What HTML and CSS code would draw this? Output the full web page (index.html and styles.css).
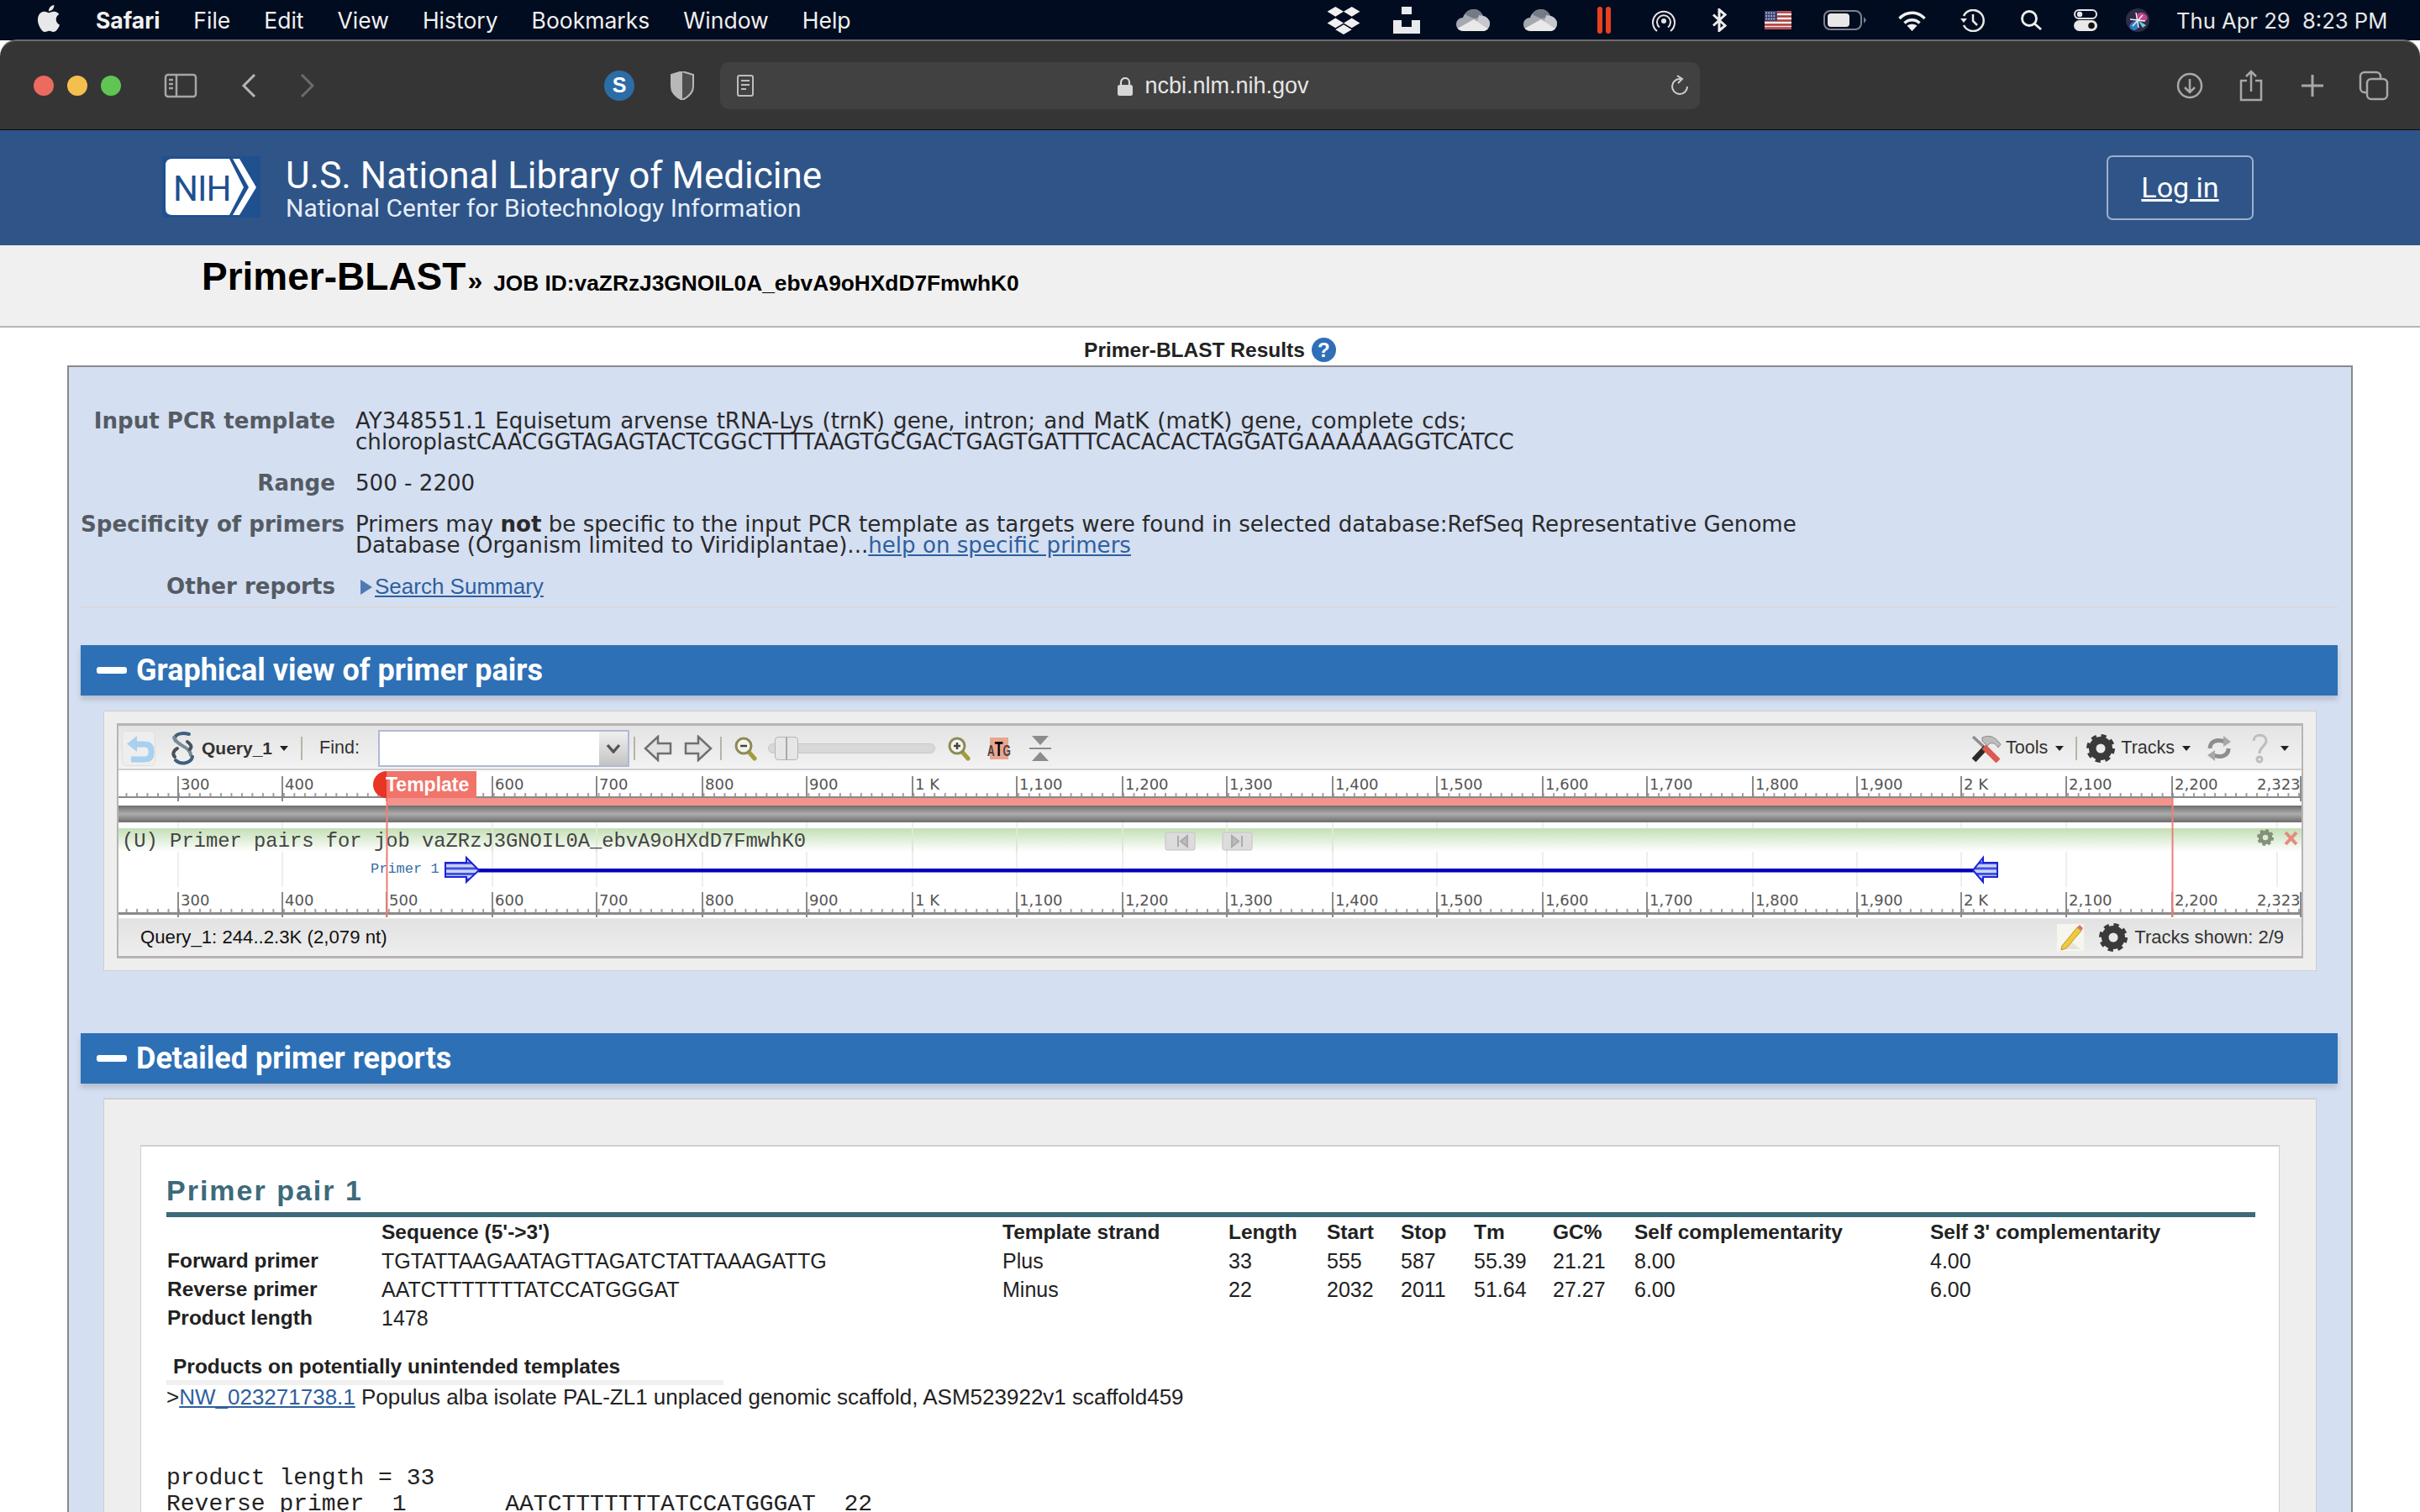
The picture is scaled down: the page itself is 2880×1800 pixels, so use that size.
FILE: index.html
```html
<!DOCTYPE html>
<html lang="en">
<head>
    <meta charset="UTF-8">
    <title>Primer-BLAST Results</title>
    <link rel="stylesheet" href="styles.css">
</head>
<body>
<svg class="defs" width="0" height="0">
    <symbol id="gear" viewBox="0 0 40 40">
        <circle cx="20" cy="20" r="11.5" fill="none" stroke="currentColor" stroke-width="10"/>
        <circle cx="20" cy="20" r="17" fill="none" stroke="currentColor" stroke-width="6" stroke-dasharray="7 6.35"/>
    </symbol>
    <clipPath id="cloudclip">
        <path d="M9 26C3 26 0 22 0 18 0 13 4 10 8 10 10 4 15 0 21 0 26 0 30 3 32 8 37 9 40 13 40 17 40 22 36 26 32 26z"/>
    </clipPath>
    <symbol id="cloud" viewBox="0 0 40 26">
        <g clip-path="url(#cloudclip)">
            <rect width="40" height="26" fill="#a4a8af"/>
            <path d="M8 0h26v9l-6 1-7 1-9-4z" fill="#747b86"/>
            <path d="M27 7l13 2v17H22z" fill="#c5c8cd"/>
            <path d="M-2 25l23-13 21 14v2H-2z" fill="#e9e9ea"/>
        </g>
    </symbol>
    <symbol id="mag" viewBox="0 0 28 30">
        <path d="M18 19l7 8" stroke="#a39c3c" stroke-width="5" stroke-linecap="round"/>
        <circle cx="12" cy="12" r="9" fill="#f4f4ec" stroke="#8d8a58" stroke-width="3"/>
    </symbol>
    <pattern id="stripes" width="6" height="6.5" patternUnits="userSpaceOnUse">
        <rect width="6" height="3.2" fill="#3f4fe0"/>
        <rect y="3.2" width="6" height="3.3" fill="#c9d4fb"/>
    </pattern>
    <pattern id="minor" x="213" width="12.49" height="4" patternUnits="userSpaceOnUse">
        <rect width="2" height="4" fill="#a0a0a0"/>
    </pattern>
    <linearGradient id="seqbar" x1="0" y1="0" x2="0" y2="1">
        <stop offset="0" stop-color="#6e6e6e"/>
        <stop offset=".5" stop-color="#acacac"/>
        <stop offset="1" stop-color="#6c6c6c"/>
    </linearGradient>
    <linearGradient id="trackhead" x1="0" y1="0" x2="0" y2="1">
        <stop offset="0" stop-color="#c3dfb5"/>
        <stop offset="1" stop-color="#ffffff"/>
    </linearGradient>
</svg>

<div class="menubar">
    <svg class="apple" viewBox="0 0 24 24"><path fill="#e8e8e8" d="M12.152 6.896c-.948 0-2.415-1.078-3.96-1.04-2.04.027-3.91 1.183-4.961 3.014-2.117 3.675-.546 9.103 1.519 12.09 1.013 1.454 2.208 3.09 3.792 3.039 1.52-.065 2.09-.987 3.935-.987 1.831 0 2.35.987 3.96.948 1.637-.026 2.676-1.48 3.676-2.948 1.156-1.688 1.636-3.325 1.662-3.415-.039-.013-3.182-1.221-3.22-4.857-.026-3.04 2.48-4.494 2.597-4.559-1.429-2.09-3.623-2.324-4.39-2.376-2-.156-3.675 1.09-4.61 1.09zM15.53 3.83c.843-1.012 1.4-2.427 1.245-3.83-1.207.052-2.662.805-3.532 1.818-.78.896-1.454 2.338-1.273 3.714 1.338.104 2.715-.688 3.559-1.701"/></svg>
    <nav class="menus">
        <b>Safari</b><span>File</span><span>Edit</span><span>View</span><span>History</span><span>Bookmarks</span><span>Window</span><span>Help</span>
    </nav>
    <div class="status-icons">
        <svg width="40" height="33" viewBox="0 0 40 34"><path fill="#f0f0f0" d="M10 0l10 6-10 6L0 6zM30 0l10 6-10 6-10-6zM10 14l10 6-10 6-10-6zM30 14l10 6-10 6-10-6zM20 22l10 6-10 6-10-6z"/></svg>
        <svg width="32" height="32" viewBox="0 0 32 32"><path fill="#e9eaed" d="M10 0h12v9H10zM0 16h10v8h12v-8h10v16H0z"/></svg>
        <svg width="40" height="26"><use href="#cloud"/></svg>
        <svg width="40" height="26"><use href="#cloud"/></svg>
        <svg width="16" height="32" viewBox="0 0 16 32"><rect width="6" height="32" rx="3" fill="#e8401f"/><rect x="10" width="6" height="32" rx="3" fill="#e8401f"/></svg>
        <svg width="28" height="27" viewBox="0 0 28 27" fill="none" stroke="#e4e4e4" stroke-width="2"><path d="M6 26A13 13 0 1 1 22 26M9 21.5A8 8 0 1 1 19 21.5"/><circle cx="14" cy="14" r="3" fill="#e4e4e4" stroke="none"/></svg>
        <svg width="18" height="28" viewBox="0 0 18 28" fill="none" stroke="#ececec" stroke-width="3"><path d="M2 7.5l14 13-7 6V1.500l7 6-14 13"/></svg>
        <svg class="flag" width="32" height="22" viewBox="0 0 32 22"><rect width="32" height="22" fill="#efefef"/><path d="M0 1.500h32M0 6.500h32M0 11.500h32M0 16.500h32M0 20.500h32" stroke="#b23a3a" stroke-width="2.400"/><rect width="15" height="12" fill="#3f4577"/><path d="M1.500 2.500h12M1.500 6h12M1.500 9.500h12" stroke="#dfe0ea" stroke-width="1.500" stroke-dasharray="1.500 1.500"/></svg>
        <svg width="51" height="24" viewBox="0 0 51 24"><rect x="1" y="1" width="44" height="22" rx="7" fill="none" stroke="#7e838a" stroke-width="2"/><rect x="5" y="4" width="26" height="16" rx="4" fill="#e8e8e8"/><path d="M48 8l3 4-3 4z" fill="#7e838a"/></svg>
        <svg width="33" height="25" viewBox="0 0 33 25" fill="none" stroke="#f0f0f0" stroke-width="3.500"><path d="M1.500 10C10 1 23 1 31.500 10M7.500 15.500c5-5 13-5 18 0"/><path d="M16.500 25l-6-6.500c3-2.500 9-2.500 12 0z" fill="#f0f0f0" stroke="none"/></svg>
        <svg width="29" height="27" viewBox="0 0 29 27" fill="none" stroke="#e8e8e8" stroke-width="2.500"><path d="M4 8A12.500 12.500 0 1 1 4 19"/><path d="M15 6v8l5 5"/><path d="M0 11h8L4 16z" fill="#e8e8e8" stroke="none"/></svg>
        <svg width="25" height="24" viewBox="0 0 25 24" fill="none" stroke="#f0f0f0" stroke-width="2.800"><circle cx="10" cy="10" r="8.500"/><path d="M16 16l8 7"/></svg>
        <svg width="28" height="26" viewBox="0 0 28 26"><rect x="1" y="1" width="26" height="10" rx="5" fill="none" stroke="#e8e8e8" stroke-width="2"/><circle cx="7" cy="6" r="3.200" fill="#e8e8e8"/><rect y="13" width="28" height="13" rx="6.500" fill="#e8e8e8"/><circle cx="21" cy="19.500" r="3.800" fill="#111"/></svg>
        <svg width="28" height="28" viewBox="0 0 28 28"><circle cx="14" cy="14" r="14" fill="#2e2c48"/><path d="M14 14C8 6 20 1 25 9c3 6-6 9-11 5z" fill="#c2458a"/><path d="M14 14c-7 1-13 7-7 11s11-5 7-11z" fill="#2f7fc4"/><path d="M14 14l10 6-4 3z" fill="#6fd0d8"/><path d="M5 13l18 2M12 5l3 18M8 21L20 8" stroke="#f4f4f4" stroke-width="1.400"/></svg>
        <span class="clock">Thu Apr 29&nbsp;&nbsp;8:23 PM</span>
    </div>
</div>

<div class="safari">
    <div class="lights"><i class="red"></i><i class="yellow"></i><i class="green"></i></div>
    <svg class="sidebar-btn" width="40" height="30" viewBox="0 0 40 30" fill="none" stroke="#a6a6a6" stroke-width="2.500"><rect x="2" y="2" width="36" height="26" rx="3"/><path d="M15 2v26M6 8h5M6 13h5M6 18h5"/></svg>
    <svg class="back-btn" width="18" height="30" viewBox="0 0 18 30" fill="none" stroke="#b5b5b5" stroke-width="3"><path d="M16 2L3 15l13 13"/></svg>
    <svg class="fwd-btn" width="18" height="30" viewBox="0 0 18 30" fill="none" stroke="#6b6b6b" stroke-width="3"><path d="M2 2l13 13L2 28"/></svg>
    <svg class="ext-s" width="36" height="36" viewBox="0 0 36 36"><circle cx="18" cy="18" r="18" fill="#2c6da6"/><text x="18" y="26" text-anchor="middle" class="ext-letter">S</text></svg>
    <svg class="ext-shield" width="28" height="34" viewBox="0 0 28 34"><path d="M14 0l13 4v14c0 8-7 13-13 16C8 31 1 26 1 18V4z" fill="#4e4e4e" stroke="#b8b8b8" stroke-width="2"/><path d="M14 0v34C8 31 1 26 1 18V4z" fill="#b8b8b8"/></svg>
    <div class="addressbar">
        <svg class="reader" width="20" height="26" viewBox="0 0 20 26" fill="none" stroke="#bdbdbd" stroke-width="2"><rect x="1" y="1" width="18" height="24" rx="2"/><path d="M5 7h10M5 12h10M5 17h6"/></svg>
        <div class="url">
            <svg width="18" height="22" viewBox="0 0 18 22"><rect y="9" width="18" height="13" rx="2.500" fill="#d6d6d6"/><path d="M4 10V6a5 5 0 0 1 10 0v4" fill="none" stroke="#d6d6d6" stroke-width="2.200"/></svg>
            <span>ncbi.nlm.nih.gov</span>
        </div>
        <svg class="reload" width="22" height="26" viewBox="0 0 22 26" fill="none" stroke="#cfcfcf" stroke-width="2"><path d="M13 5a9 9 0 1 0 8 9"/><path d="M9 1l6 4-5 5"/></svg>
    </div>
    <div class="safari-right">
        <svg width="32" height="34" viewBox="0 0 32 34" fill="none" stroke="#a8a8a8" stroke-width="2.500"><circle cx="16" cy="17" r="14"/><path d="M16 9v16M10 19l6 6 6-6"/></svg>
        <svg width="28" height="38" viewBox="0 0 28 38" fill="none" stroke="#a8a8a8" stroke-width="2.500"><path d="M9 13H2v23h24V13h-7M14 26V2M8 8l6-6 6 6"/></svg>
        <svg width="28" height="28" viewBox="0 0 28 28" fill="none" stroke="#a8a8a8" stroke-width="3"><path d="M14 1v26M1 14h26"/></svg>
        <svg width="36" height="36" viewBox="0 0 36 36" fill="none" stroke="#a8a8a8" stroke-width="2.500"><rect x="2" y="2" width="24" height="24" rx="5"/><rect x="10" y="10" width="24" height="24" rx="5" fill="#353535"/></svg>
    </div>
</div>

<header class="nlm-header">
    <svg class="nih-logo" width="117" height="73" viewBox="0 0 117 73">
        <rect width="117" height="73" fill="#1f5090"/>
        <path d="M12 3h68l17 34-17 33H12q-8 0-8-8V11q0-8 8-8z" fill="#fff"/>
        <path d="M84 3h8l20 34-20 33h-8l19-33z" fill="#fff"/>
        <text x="13" y="53" class="nih-text">NIH</text>
    </svg>
    <div class="nlm-titles">
        <div class="nlm-main">U.S. National Library of Medicine</div>
        <div class="nlm-sub">National Center for Biotechnology Information</div>
    </div>
    <a class="login" href="#">Log in</a>
</header>

<div class="app-title">
    <h1>Primer-BLAST</h1><span class="raquo">»</span><span class="job-id">JOB ID:vaZRzJ3GNOIL0A_ebvA9oHXdD7FmwhK0</span>
</div>

<div class="results-title">
    <b>Primer-BLAST Results</b>
    <span class="help-dot">?</span>
</div>

<main class="panel">
    <dl class="info">
        <dt class="row-template">Input PCR template</dt>
        <dd class="row-template"><span class="loose">AY348551.1 Equisetum arvense tRNA-Lys (trnK) gene, intron; and MatK (matK) gene, complete cds;</span><br>chloroplastCAACGGTAGAGTACTCGGCTTTTAAGTGCGACTGAGTGATTTCACACACTAGGATGAAAAAAGGTCATCC</dd>
        <dt class="row-range">Range</dt>
        <dd class="row-range">500 - 2200</dd>
        <dt class="row-spec">Specificity of primers</dt>
        <dd class="row-spec">Primers may <b>not</b> be specific to the input PCR template as targets were found in selected database:RefSeq Representative Genome<br>Database (Organism limited to Viridiplantae)...<a href="#">help on specific primers</a></dd>
        <dt class="row-other">Other reports</dt>
        <dd class="row-other summary"><i class="tri"></i><a href="#">Search Summary</a></dd>
    </dl>

    <h2 class="section-bar first"><i></i>Graphical view of primer pairs</h2>

    <section class="viewer-card">
        <div class="viewer">
            <div class="vtool">
                <svg class="t-undo" width="40" height="42" viewBox="0 0 40 42"><rect x=".5" y=".5" width="39" height="41" rx="5" fill="#eeeeee" stroke="#dedede"/><path d="M14 16h13q8 0 8 8v2q0 8-8 8H11" fill="none" stroke="#a9d0ee" stroke-width="7"/><path d="M6 15.500L18 6v19z" fill="#a9d0ee"/></svg>
                <svg class="t-chain" width="28" height="44" viewBox="0 0 28 44" fill="none" stroke-width="4" stroke-linecap="round"><path d="M6 13C2 6 12 2 22 5" stroke="#3f5f80"/><path d="M4 9c2 9 20 11 20 21" stroke="#7a8a99"/><path d="M20 14c4 3 6 6 3 9M8 22c-5 3-6 7-3 10" stroke="#4a4f58"/><path d="M6 36c6 6 18 4 20-4" stroke="#3f5f80"/></svg>
                <b class="t-query">Query_1</b>
                <i class="caret t-caret"></i>
                <i class="t-sep sep-a"></i>
                <span class="t-find">Find:</span>
                <div class="combo"><div class="combo-input"></div><div class="combo-btn"><svg width="18" height="12" viewBox="0 0 18 12" fill="none" stroke="#555" stroke-width="3.400"><path d="M2 2l7 8 7-8"/></svg></div></div>
                <i class="t-sep sep-b"></i>
                <svg class="t-arrow a-left" width="34" height="32" viewBox="0 0 34 32"><path d="M17 2L2 16l15 14V22h15V10H17z" fill="#e2e2e2" stroke="#6f6f6f" stroke-width="2.500"/></svg>
                <svg class="t-arrow a-right" width="34" height="32" viewBox="0 0 34 32"><path d="M17 2l15 14-15 14V22H2V10h15z" fill="#e2e2e2" stroke="#6f6f6f" stroke-width="2.500"/></svg>
                <i class="t-sep sep-c"></i>
                <svg class="t-mag m-out" width="28" height="30"><use href="#mag"/><path d="M8 12h8" stroke="#444" stroke-width="2.500"/></svg>
                <div class="slider"><div class="slider-thumb"></div></div>
                <svg class="t-mag m-in" width="28" height="30"><use href="#mag"/><path d="M8 12h8M12 8v8" stroke="#444" stroke-width="2.500"/></svg>
                <svg class="t-atg" width="30" height="26" viewBox="0 0 30 26"><rect x="4" width="22" height="26" fill="#eaa58f"/><text x="15" y="15" text-anchor="middle" transform="scale(1 1.500)" class="atg-text">A<tspan class="atg-t">T</tspan>G</text></svg>
                <svg class="t-collapse" width="26" height="32" viewBox="0 0 26 32"><path d="M3 1h20l-10 11zM3 31h20L13 20z" fill="#8c8c8c"/><path d="M0 16h26" stroke="#8c8c8c" stroke-width="2"/></svg>

                <svg class="t-tools" width="36" height="34" viewBox="0 0 36 34"><path d="M2 3l15 14" stroke="#8c8c8c" stroke-width="3.500"/><path d="M17 16L3 31" stroke="#2a2a2a" stroke-width="6.500"/><path d="M15 15l17 17" stroke="#dc5a50" stroke-width="7"/><path d="M13 4q12-6 22 8l-3 4q-4-7-10-5l-3 3-6-6z" fill="#bdbdbd" stroke="#8a8a8a"/></svg>
                <span class="t-tools-label">Tools</span>
                <i class="caret t-caret"></i>
                <i class="t-sep sep-d"></i>
                <svg class="t-gear" width="34" height="34" color="#3a3a3a"><use href="#gear"/></svg>
                <span class="t-tracks-label">Tracks</span>
                <i class="caret t-caret"></i>
                <svg class="t-refresh" width="30" height="32" viewBox="0 0 30 32" fill="none" stroke="#8e8e8e" stroke-width="5"><path d="M4 16C4 8 12 4 22 8"/><path d="M26 16c0 8-8 12-18 8"/><path d="M20 1l9 7-9 6zM10 31l-9-7 9-6z" fill="#a8a8a8" stroke="none"/></svg>
                <svg class="t-question" width="20" height="36" viewBox="0 0 20 36" fill="none" stroke="#bdbdbd" stroke-width="3"><path d="M3 9c0-9 15-9 15 0 0 6-8 7-8 15"/><circle cx="10" cy="31" r="3"/></svg>
                <i class="caret t-caret-q"></i>
            </div>

            <svg class="seqview" width="2598" height="176" viewBox="142 918 2598 176">
                <!-- grid lines -->
                <path class="grid" d="M213 979V1057M337 979V1057M461 979V1057M587 979V1057M711 979V1057M837 979V1057M961 979V1057M1087 979V1057M1211 979V1057M1337 979V1057M1461 979V1057M1587 979V1057M1711 979V1057M1837 979V1057M1961 979V1057M2087 979V1057M2211 979V1057M2335 979V1057M2460 979V1057M2711 979V1057"/>

                <!-- top ruler -->
                <rect x="142" y="945" width="2598" height="4" fill="url(#minor)"/>
                <rect x="142" y="949" width="2598" height="2" fill="#8a8a8a"/>
                <path class="major" d="M213 925V955M337 925V955M461 925V955M587 925V955M711 925V955M837 925V955M961 925V955M1087 925V955M1211 925V955M1337 925V955M1461 925V955M1587 925V955M1711 925V955M1837 925V955M1961 925V955M2087 925V955M2211 925V955M2335 925V955M2460 925V955M2586 925V955M2739 925V955"/>
                <g class="ruler-text">
                    <text x="216" y="941">300</text><text x="340" y="941">400</text><text x="590" y="941">600</text><text x="714" y="941">700</text><text x="840" y="941">800</text><text x="964" y="941">900</text><text x="1090" y="941">1 K</text><text x="1214" y="941">1,100</text><text x="1340" y="941">1,200</text><text x="1464" y="941">1,300</text><text x="1590" y="941">1,400</text><text x="1714" y="941">1,500</text><text x="1840" y="941">1,600</text><text x="1964" y="941">1,700</text><text x="2090" y="941">1,800</text><text x="2214" y="941">1,900</text><text x="2338" y="941">2 K</text><text x="2463" y="941">2,100</text><text x="2589" y="941">2,200</text><text x="2687" y="941">2,323</text>
                </g>

                <!-- template range and sequence bar -->
                <rect x="461" y="951" width="2125" height="9" fill="#f4938c"/>
                <rect x="142" y="960" width="2598" height="20" fill="url(#seqbar)"/>

                <!-- primer track -->
                <rect x="142" y="987" width="2598" height="28" fill="url(#trackhead)"/>
                <path class="grid-head" d="M587 987V1015M711 987V1015M1087 987V1015M1211 987V1015M1337 987V1015M1461 987V1015M1587 987V1015"/>
                <text x="146" y="1009" class="track-title">(U) Primer pairs for job vaZRzJ3GNOIL0A_ebvA9oHXdD7FmwhK0</text>
                <g class="track-btn">
                    <rect x="1388" y="992" width="35" height="21" rx="2"/><path d="M1403 996v13M1414 996l-8 6.500 8 6.500z"/>
                    <rect x="1456" y="992" width="35" height="21" rx="2"/><path d="M1479 996v13M1467 996l8 6.500-8 6.500z"/>
                </g>
                <use href="#gear" x="2687" y="988" width="20" height="20" color="#84907c"/>
                <path d="M2721 992l13 14M2734 992l-13 14" stroke="#e58a80" stroke-width="4"/>

                <text x="442" y="1040" class="primer-label">Primer 1</text>
                <rect x="570" y="1035" width="1780" height="4.500" fill="#0000bb"/>
                <path d="M531 1028h25v-6l15 15-15 14v-6h-25z" fill="url(#stripes)" stroke="#1e22d8" stroke-width="2"/>
                <path d="M2378 1028h-17v-6l-12 15 12 14v-6h17z" fill="url(#stripes)" stroke="#1e22d8" stroke-width="2"/>

                <!-- bottom ruler -->
                <rect x="142" y="1083" width="2598" height="4" fill="url(#minor)"/>
                <rect x="142" y="1087" width="2598" height="3" fill="#8a8a8a"/>
                <path class="major" d="M213 1063V1093M337 1063V1093M461 1063V1093M587 1063V1093M711 1063V1093M837 1063V1093M961 1063V1093M1087 1063V1093M1211 1063V1093M1337 1063V1093M1461 1063V1093M1587 1063V1093M1711 1063V1093M1837 1063V1093M1961 1063V1093M2087 1063V1093M2211 1063V1093M2335 1063V1093M2460 1063V1093M2586 1063V1093M2739 1063V1093"/>
                <g class="ruler-text">
                    <text x="216" y="1079">300</text><text x="340" y="1079">400</text><text x="464" y="1079">500</text><text x="590" y="1079">600</text><text x="714" y="1079">700</text><text x="840" y="1079">800</text><text x="964" y="1079">900</text><text x="1090" y="1079">1 K</text><text x="1214" y="1079">1,100</text><text x="1340" y="1079">1,200</text><text x="1464" y="1079">1,300</text><text x="1590" y="1079">1,400</text><text x="1714" y="1079">1,500</text><text x="1840" y="1079">1,600</text><text x="1964" y="1079">1,700</text><text x="2090" y="1079">1,800</text><text x="2214" y="1079">1,900</text><text x="2338" y="1079">2 K</text><text x="2463" y="1079">2,100</text><text x="2589" y="1079">2,200</text><text x="2687" y="1079">2,323</text>
                </g>

                <!-- template markers -->
                <path d="M461 919a16 16 0 0 0 0 32z" fill="#e83524"/>
                <rect x="461" y="919" width="107" height="32" fill="#f1746a"/>
                <text x="460" y="943" class="template-label">Template</text>
                <path d="M461.500 951V1093M2586.500 951V1093" stroke="#ee7f78" stroke-width="2"/>
            </svg>

            <div class="vstatus">
                <span class="range-text">Query_1: 244..2.3K (2,079 nt)</span>
                <svg class="s-note" width="32" height="32" viewBox="0 0 32 32"><rect width="32" height="32" fill="#f6f6ee"/><path d="M2 30h26L16 20z" fill="#e4e4dc"/><path d="M6 26L24 4l5 4-18 21-6 2z" fill="#f0c93c" stroke="#b89a28"/><path d="M24 4l3-3 4 4-2 3z" fill="#e07070"/></svg>
                <svg class="s-gear" width="34" height="34" color="#3a3a3a"><use href="#gear"/></svg>
                <span class="tracks-shown">Tracks shown: 2/9</span>
            </div>
        </div>
    </section>

    <h2 class="section-bar second"><i></i>Detailed primer reports</h2>

    <section class="report-card">
        <div class="report">
            <h3>Primer pair 1</h3>
            <table class="primers">
                <thead>
                    <tr><th></th><th>Sequence (5'-&gt;3')</th><th>Template strand</th><th>Length</th><th>Start</th><th>Stop</th><th>Tm</th><th>GC%</th><th>Self complementarity</th><th>Self 3' complementarity</th></tr>
                </thead>
                <tbody>
                    <tr><th>Forward primer</th><td>TGTATTAAGAATAGTTAGATCTATTAAAGATTG</td><td>Plus</td><td>33</td><td>555</td><td>587</td><td>55.39</td><td>21.21</td><td>8.00</td><td>4.00</td></tr>
                    <tr><th>Reverse primer</th><td>AATCTTTTTTTATCCATGGGAT</td><td>Minus</td><td>22</td><td>2032</td><td>2011</td><td>51.64</td><td>27.27</td><td>6.00</td><td>6.00</td></tr>
                    <tr><th>Product length</th><td>1478</td><td></td><td></td><td></td><td></td><td></td><td></td><td></td><td></td></tr>
                </tbody>
            </table>
            <h4>Products on potentially unintended templates</h4>
            <p class="hit">&gt;<a href="#">NW_023271738.1</a> Populus alba isolate PAL-ZL1 unplaced genomic scaffold, ASM523922v1 scaffold459</p>
            <pre class="alignment">product length = 33
Reverse primer  1       AATCTTTTTTTATCCATGGGAT  22</pre>
        </div>
    </section>
</main>
</body>
</html>
```
FILE: styles.css
```css
html, body {
    margin: 0;
    height: 1800px;
    overflow: hidden;
    background: #fff;
    font-family: "Liberation Sans", Arial, sans-serif;
    color: #222;
}
.defs { position: absolute; }
a { color: #2f5f9e; }

/* mac menu bar */
.menubar {
    height: 48px;
    background: #010c20;
    display: flex;
    align-items: center;
    color: #f0f0f0;
    font-family: Inter, sans-serif;
    font-size: 26.5px;
}
.apple { width: 32px; height: 34px; margin: 0 0 4px 42px; }
.menus { display: flex; gap: 40px; margin-left: 40px; }
.menus b { font-weight: 700; }
.status-icons {
    margin-left: auto;
    display: grid;
    grid-template-columns: 74px 76px 82px 78px 74px 68px 64px 76px 82px 78px 66px 74px 56px 68px 302px;
    justify-items: center;
    align-items: center;
}
.clock { justify-self: start; margin-left: 12px; white-space: nowrap; color: #e8e8e8; font-size: 25.6px; }

/* browser toolbar */
.safari {
    height: 105px;
    border-top: 2px solid #6b6b6b;
    border-bottom: 1px solid #0c0c0c;
    background: #353535;
    border-radius: 20px 20px 0 0;
    display: flex;
    align-items: center;
    margin-top: -1px;
}
.lights { display: flex; gap: 16px; margin-left: 40px; }
.lights i { width: 24px; height: 24px; border-radius: 50%; }
.lights .red { background: #ec6a5e; }
.lights .yellow { background: #f4bf4f; }
.lights .green { background: #61c554; }
.sidebar-btn { margin-left: 51px; }
.back-btn { margin-left: 52px; }
.fwd-btn { margin-left: 52px; }
.ext-s { margin-left: 344px; }
.ext-letter { font: 700 25px "Liberation Sans", sans-serif; fill: #fff; }
.ext-shield { margin-left: 43px; }
.addressbar {
    margin-left: 31px;
    width: 1166px;
    height: 56px;
    background: #414141;
    border-radius: 10px;
    display: flex;
    align-items: center;
    justify-content: space-between;
    padding: 0 14px 0 20px;
    box-sizing: border-box;
}
.url {
    display: flex;
    align-items: center;
    gap: 14px;
    color: #e6e6e6;
    font-size: 27px;
    margin: 2px 0 0 4px;
}
.safari-right {
    margin-left: auto;
    display: grid;
    grid-template-columns: 72px 74px 72px 74px;
    justify-items: center;
    align-items: center;
    margin-right: 18px;
}

/* NLM banner */
.nlm-header {
    height: 137px;
    background: #2f5488;
    display: flex;
    align-items: center;
    padding-left: 193px;
    color: #fff;
    font-family: Roboto, sans-serif;
}
.nih-logo { margin-bottom: 2px; }
.nih-text { font: 400 42px Roboto, sans-serif; fill: #1f5090; letter-spacing: -1px; }
.nlm-titles { margin-left: 30px; margin-bottom: 2px; }
.nlm-main { font-size: 44px; line-height: 50px; }
.nlm-sub { font-size: 30px; line-height: 28px; color: #e6eef8; }
.login {
    margin-left: auto;
    margin-right: 198px;
    width: 175px;
    height: 77px;
    box-sizing: border-box;
    border: 2px solid #9db0cb;
    border-radius: 7px;
    color: #fff;
    font-size: 34px;
    display: flex;
    align-items: center;
    justify-content: center;
    padding-bottom: 2px;
}

/* app title band */
.app-title {
    height: 96px;
    background: #f0f0f0;
    border-bottom: 2px solid #b5b5bb;
    padding-left: 240px;
    display: flex;
    align-items: baseline;
    color: #000;
    line-height: 74px;
}
.app-title h1 { margin: 0; font-size: 46px; }
.raquo { font-size: 32px; font-weight: 700; margin-left: 2px; }
.job-id { font-size: 26.3px; font-weight: 700; margin-left: 13px; position: relative; top: 1px; }

.results-title {
    height: 45px;
    display: flex;
    align-items: center;
    justify-content: center;
    gap: 8px;
    font-size: 24.5px;
    padding-top: 8px;
    box-sizing: border-box;
}
.help-dot {
    width: 29px;
    height: 29px;
    border-radius: 50%;
    background: #2e6fb7;
    color: #fff;
    font-weight: 700;
    font-size: 24px;
    text-align: center;
    line-height: 29px;
}

/* results panel */
.panel {
    margin-left: 80px;
    width: 2720px;
    height: 1400px;
    box-sizing: border-box;
    border: 2px solid #8a8a8a;
    background: #d4dff2;
    padding: 0 16px 0 14px;
}
.info {
    margin: 0;
    height: 287px;
    box-sizing: border-box;
    padding-top: 52px;
    border-bottom: 2px solid #d9d9d9;
    display: grid;
    grid-template-columns: 303px 1fr;
    column-gap: 24px;
    font-family: "DejaVu Sans", Verdana, sans-serif;
    font-size: 26.1px;
    line-height: 25px;
    align-content: start;
}
.info dt { text-align: right; font-weight: 700; color: #555b63; white-space: nowrap; }
.info dd { margin: 0; color: #2a2a2a; white-space: nowrap; }
.loose { word-spacing: 1.8px; }
.row-range, .row-spec, .row-other { margin-top: 24px !important; }
.summary { font-family: "Liberation Sans", sans-serif; font-size: 26px; display: flex; align-items: center; }
.tri {
    width: 0;
    height: 0;
    margin-left: 6px;
    margin-right: 3px;
    border-left: 14px solid #5079b4;
    border-top: 9px solid transparent;
    border-bottom: 9px solid transparent;
}
.section-bar {
    margin: 0;
    height: 60px;
    background: #2d70b6;
    color: #fff;
    font-family: Roboto, sans-serif;
    font-weight: 700;
    font-size: 36px;
    display: flex;
    align-items: center;
    box-shadow: 0 5px 6px rgba(60, 60, 60, 0.2);
}
.section-bar i {
    width: 36px;
    height: 8px;
    border-radius: 3px;
    background: #fff;
    margin: 0 11px 0 19px;
}
.section-bar.first { margin-top: 44px; }
.section-bar.second { margin-top: 74px; }

/* sequence viewer */
.viewer-card {
    margin: 18px 25px 0 27px;
    height: 310px;
    box-sizing: border-box;
    background: #eeeeee;
    border: 1px solid #cfcfcf;
    padding: 14px 14px 0 15px;
}
.viewer {
    width: 2602px;
    height: 280px;
    box-sizing: border-box;
    border: 3px solid #b9b3b3;
    border-width: 3px 2px;
    background: #e9e9e9;
    font-size: 21.5px;
    color: #333;
}
.vtool {
    height: 49px;
    padding: 2px 0 0 4px;
    display: flex;
    align-items: center;
    background: linear-gradient(#e4e4e4, #f2f2f2);
    border-bottom: 2px solid #cfcfcf;
}
.seqview { display: block; background: #fff; }
.t-chain { margin-left: 18px; }
.t-query { margin-left: 9px; font-size: 21px; }
.caret {
    width: 0;
    height: 0;
    border-top: 6px solid #222;
    border-left: 5px solid transparent;
    border-right: 5px solid transparent;
}
.t-caret { margin-left: 9px; }
.t-sep { width: 2px; height: 28px; background: #b5b5a5; }
.sep-a { margin-left: 15px; }
.t-find { margin-left: 20px; width: 70px; }
.combo {
    width: 299px;
    height: 44px;
    box-sizing: border-box;
    border: 2px solid #b2b8d4;
    display: flex;
    background: #fff;
}
.combo-input { flex: 1; }
.combo-btn {
    width: 34px;
    background: linear-gradient(#f0f0f0, #c4c4c4);
    display: flex;
    align-items: center;
    justify-content: center;
}
.sep-b { margin-left: 5px; }
.a-left { margin-left: 10px; }
.a-right { margin-left: 14px; }
.sep-c { margin-left: 9px; }
.m-out { margin-left: 14px; }
.slider {
    margin-left: 13px;
    width: 199px;
    height: 12px;
    background: #d8d8d8;
    border: 1px solid #c8c8c8;
    border-radius: 6px;
    display: flex;
    align-items: center;
    box-sizing: border-box;
}
.slider-thumb {
    margin-left: 7px;
    width: 28px;
    height: 28px;
    background: linear-gradient(90deg, #e6e6e6 48%, #a8a8a8 48%, #a8a8a8 54%, #e6e6e6 54%);
    border: 1px solid #b5b5b5;
    border-radius: 4px;
    flex: none;
    box-sizing: border-box;
}
.m-in { margin-left: 14px; }
.t-atg { margin-left: 19px; }
.atg-text { font: 700 12px "Liberation Sans", sans-serif; fill: #444; }
.atg-t { font-size: 16px; fill: #000; }
.t-collapse { margin-left: 21px; }
.t-tools { margin-left: auto; }
.t-tools-label { margin-left: 5px; }
.sep-d { margin-left: 14px; }
.t-gear { margin-left: 11px; }
.t-tracks-label { margin-left: 7px; }
.t-refresh { margin-left: 19px; }
.t-question { margin-left: 23px; }
.t-caret-q {
    margin: 0 15px;
    width: 0;
    height: 0;
    border-top: 6px solid #222;
    border-left: 5px solid transparent;
    border-right: 5px solid transparent;
}
.grid { stroke: #eeeeee; stroke-width: 2; fill: none; }
.grid-head { stroke: #dde8d4; stroke-width: 2; fill: none; }
.major { stroke: #8a8a8a; stroke-width: 2; fill: none; }
.ruler-text text { font: 18px "DejaVu Sans", sans-serif; fill: #555; }
.track-title { font: 23.8px "Liberation Mono", monospace; fill: #444; }
.primer-label { font: 17px "Liberation Mono", monospace; fill: #3a6ea5; }
.template-label { font: 700 23px "Liberation Sans", sans-serif; fill: #fff; }
.track-btn rect { fill: #dcdcdc; stroke: #c4c4c4; }
.track-btn path { stroke: #aaa; stroke-width: 2; fill: #bdbdbd; }
.vstatus {
    height: 44px;
    margin-top: 1px;
    background: linear-gradient(#e2e2e2, #eeeeee);
    display: flex;
    align-items: center;
    padding-left: 25px;
}
.range-text { font-size: 22.2px; color: #111; margin-left: 1px; }
.s-note { margin-left: auto; }
.s-gear { margin-left: 18px; }
.tracks-shown { margin: 0 21px 0 8px; font-size: 22px; }

/* primer report */
.report-card {
    margin: 17px 25px 0 27px;
    height: 600px;
    box-sizing: border-box;
    background: #eeeeee;
    border: 2px solid #cfcfcf;
    border-width: 2px 1px 0;
    padding: 54px 43px 0 43px;
}
.report {
    height: 520px;
    background: #fff;
    border: 2px solid #cfcfcf;
    border-width: 2px 1px 0;
    padding: 0 28px 0 30px;
    font-size: 25px;
    color: #222;
}
.report h3 {
    margin: 0;
    height: 84px;
    line-height: 104px;
    box-sizing: border-box;
    border-bottom: 6px solid #3d6a7b;
    font-size: 34px;
    letter-spacing: 2px;
    color: #3d6a7b;
}
.primers {
    border-collapse: collapse;
    table-layout: fixed;
    width: 2484px;
    font-size: 25px;
}
.primers tr { height: 34px; }
.primers thead tr { height: 35px; }
.primers th { font-size: 24.5px; }
.primers th, .primers td { padding: 0 0 0 1px; text-align: left; white-space: nowrap; }
.primers th:nth-child(1) { width: 254px; }
.primers th:nth-child(2) { width: 738px; }
.primers th:nth-child(3) { width: 268px; }
.primers th:nth-child(4) { width: 116px; }
.primers th:nth-child(5) { width: 87px; }
.primers th:nth-child(6) { width: 86px; }
.primers th:nth-child(7) { width: 93px; }
.primers th:nth-child(8) { width: 96px; }
.primers th:nth-child(9) { width: 351px; }
.report h4 {
    margin: 26px 0 0;
    width: 663px;
    height: 37px;
    box-sizing: border-box;
    border-bottom: 6px solid #f0f0f0;
    padding-left: 8px;
    font-size: 24.5px;
    line-height: 30px;
}
.hit { margin: 0; line-height: 28px; font-size: 26px; }
.alignment {
    margin: 67px 0 0;
    font-family: "Liberation Mono", monospace;
    font-size: 28px;
    line-height: 31px;
}
```
